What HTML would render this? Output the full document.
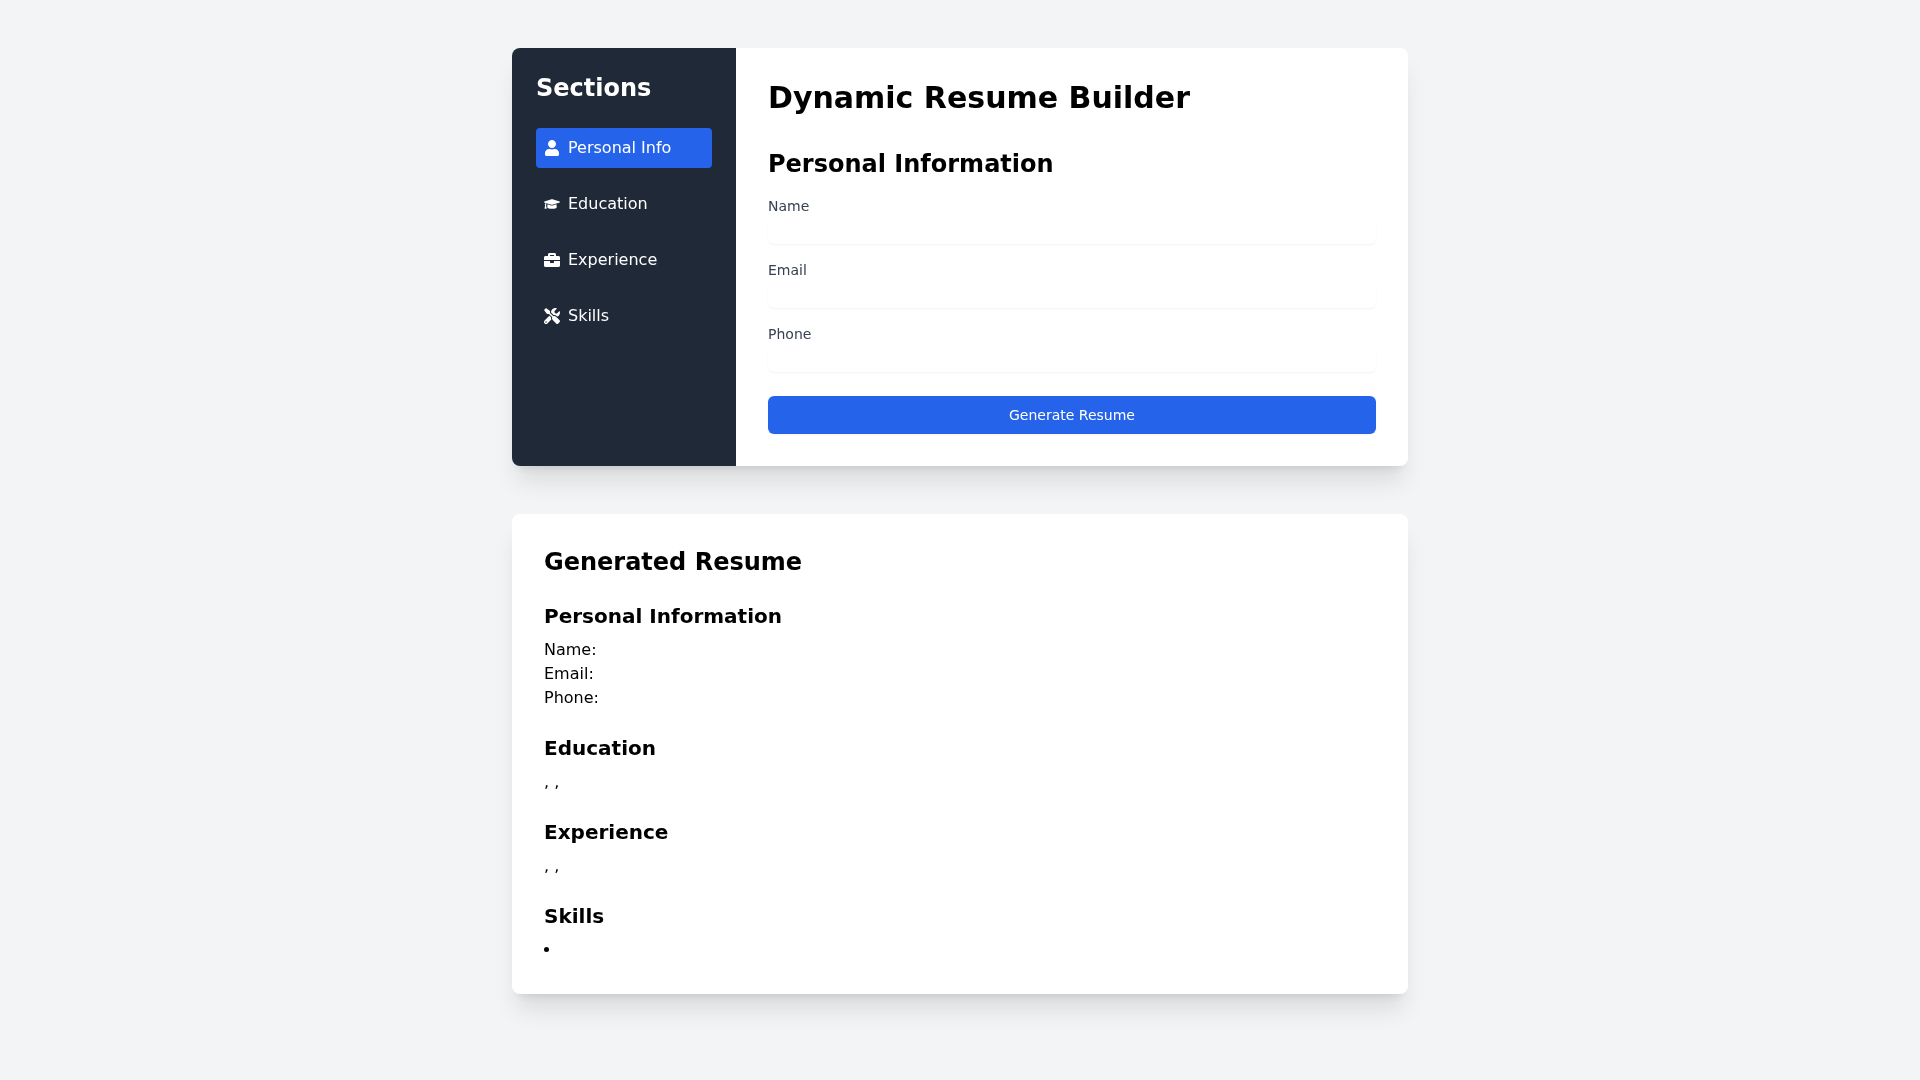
<!DOCTYPE html>
<html lang="en">
<head>
<meta charset="UTF-8">
<title>Dynamic Resume Builder</title>
<style>
*,*::before,*::after{box-sizing:border-box;border:0 solid #e5e7eb;}
html{line-height:1.5;-webkit-text-size-adjust:100%;}
html,body{margin:0;padding:0;}
body{width:1920px;height:1080px;overflow:hidden;background:#f3f4f6;color:#000;
  font-family:"DejaVu Sans","Liberation Sans",sans-serif;font-size:16px;line-height:24px;}
aside,nav,main,section,form{display:block;margin:0;padding:0;}
h1,h2,h3,p,ul,li{margin:0;padding:0;font-size:inherit;font-weight:inherit;}
button,input{font-family:inherit;font-size:100%;font-weight:inherit;line-height:inherit;color:inherit;margin:0;padding:0;background:transparent;-webkit-appearance:none;appearance:none;outline:none;cursor:pointer;}
.container{will-change:transform;width:896px;margin:0 auto;padding-top:48px;}
.card{background:#fff;border-radius:8px;
  box-shadow:0 20px 25px -5px rgba(0,0,0,.1),0 8px 10px -6px rgba(0,0,0,.1);}
.top{display:flex;overflow:hidden;}
.side{width:224px;background:#1f2937;color:#fff;padding:24px;}
.side h2{font-size:24px;line-height:32px;font-weight:700;margin-bottom:24px;}
.nav{display:block;width:100%;height:40px;padding:8px;border-radius:4px;margin-bottom:16px;
  font-size:16px;line-height:24px;color:#fff;text-align:left;white-space:nowrap;}
.nav.active{background:#2563eb;}
.nav svg{display:inline-block;width:16px;height:16px;vertical-align:-3px;margin-right:8px;fill:#fff;overflow:visible;}
.main{width:672px;padding:32px;}
.main h1{font-size:30px;line-height:36px;font-weight:700;margin-bottom:32px;}
.main h2{font-size:24px;line-height:32px;font-weight:700;margin-bottom:16px;}
.field{margin-bottom:16px;}
.field label{display:block;font-size:14px;line-height:20px;color:#374151;}
.field input{display:block;width:100%;height:24px;margin-top:4px;border-radius:6px;background:#fff;cursor:text;
  box-shadow:0 1px 2px 0 rgba(0,0,0,.05);}
.btn{display:flex;justify-content:center;width:100%;margin-top:24px;padding:8px 16px;border:1px solid transparent;
  border-radius:6px;background:#2563eb;color:#fff;font-size:14px;line-height:20px;
  box-shadow:0 1px 2px 0 rgba(0,0,0,.05);}
.out{margin-top:48px;padding:32px;}
.out h2{font-size:24px;line-height:32px;font-weight:700;margin-bottom:24px;}
.sec{margin-bottom:24px;}
.sec:last-child{margin-bottom:0;}
.sec h3{font-size:20px;line-height:28px;font-weight:700;margin-bottom:8px;}
.sec ul{list-style:disc inside;}
</style>
</head>
<body>
<div class="container">
  <div class="card top">
    <aside class="side">
      <h2>Sections</h2>
      <nav>
      <button type="button" class="nav active"><svg viewBox="0 0 448 512"><path d="M224 256c70.700 0 128-57.300 128-128S294.700 0 224 0 96 57.300 96 128s57.300 128 128 128zm89.600 32h-16.700c-22.200 10.200-46.900 16-72.900 16s-50.600-5.800-72.900-16h-16.700C60.200 288 0 348.200 0 422.400V464c0 26.500 21.500 48 48 48h352c26.500 0 48-21.500 48-48v-41.600c0-74.200-60.200-134.400-134.400-134.400z"/></svg>Personal Info</button>
      <button type="button" class="nav"><svg viewBox="0 0 640 512"><path d="M622.340 153.200L343.400 67.500c-15.200-4.670-31.600-4.670-46.790 0L17.660 153.200c-23.540 7.230-23.540 38.360 0 45.590l48.630 14.940c-10.670 13.190-17.230 29.280-17.880 46.900C38.780 266.150 32 276.110 32 288c0 10.780 5.680 19.850 13.860 25.650L20.330 428.530C18.110 438.520 25.710 448 35.940 448h56.110c10.240 0 17.840-9.480 15.620-19.470L82.140 313.650C90.320 307.850 96 298.780 96 288c0-11.570-6.470-21.250-15.660-26.870.76-15.020 8.440-28.300 20.690-36.720L296.600 284.500c9.060 2.780 26.440 6.250 46.790 0l278.950-85.700c23.550-7.240 23.550-38.360 0-45.600zM352.790 315.090c-28.530 8.760-52.840 3.920-65.590 0l-145.020-44.550L128 384c0 35.350 85.960 64 192 64s192-28.650 192-64l-14.180-113.470-145.030 44.560z"/></svg>Education</button>
      <button type="button" class="nav"><svg viewBox="0 0 512 512"><path d="M320 336c0 8.840-7.160 16-16 16h-96c-8.840 0-16-7.160-16-16v-48H0v144c0 25.600 22.400 48 48 48h416c25.600 0 48-22.400 48-48V288H320v48zm144-208h-80V80c0-25.600-22.400-48-48-48H176c-25.600 0-48 22.400-48 48v48H48c-25.600 0-48 22.400-48 48v80h512v-80c0-25.600-22.400-48-48-48zm-144 0H192V96h128v32z"/></svg>Experience</button>
      <button type="button" class="nav"><svg viewBox="0 0 512 512"><path d="M501.100 395.700L384 278.600c-23.100-23.100-57.600-27.600-85.400-13.900L192 158.100V96L64 0 0 64l96 128h62.100l106.600 106.600c-13.600 27.800-9.200 62.300 13.900 85.400l117.100 117.100c14.600 14.600 38.200 14.600 52.700 0l52.700-52.700c14.500-14.600 14.500-38.200 0-52.700zM331.700 225c28.300 0 54.900 11 74.900 31l19.400 19.400c15.800-6.900 30.800-16.500 43.800-29.500 37.100-37.100 49.700-89.300 37.900-136.700-2.200-9-13.500-12.100-20.100-5.500l-74.400 74.400-67.900-11.300L334 98.900l74.400-74.400c6.600-6.600 3.400-17.900-5.700-20.200-47.400-11.700-99.600.9-136.600 37.900-28.500 28.500-41.900 66.100-41.200 103.600l82.100 82.100c8.100-1.900 16.500-2.900 24.700-2.900zm-103.900 82l-56.700-56.700L18.700 402.800c-25 25-25 65.500 0 90.500s65.500 25 90.500 0l123.600-123.600c-7.600-19.900-9.900-41.600-5-62.700zM64 472c-13.200 0-24-10.800-24-24 0-13.300 10.700-24 24-24s24 10.700 24 24c0 13.200-10.700 24-24 24z"/></svg>Skills</button>
      </nav>
    </aside>
    <main class="main">
      <h1>Dynamic Resume Builder</h1>
      <form>
      <h2>Personal Information</h2>
      <div class="field"><label for="f-name">Name</label><input id="f-name" type="text"></div>
      <div class="field"><label for="f-email">Email</label><input id="f-email" type="email"></div>
      <div class="field" style="margin-bottom:0"><label for="f-phone">Phone</label><input id="f-phone" type="tel"></div>
      <button type="button" class="btn">Generate Resume</button>
      </form>
    </main>
  </div>
  <section class="card out">
    <h2>Generated Resume</h2>
    <div class="sec"><h3>Personal Information</h3><p>Name: </p><p>Email: </p><p>Phone: </p></div>
    <div class="sec"><h3>Education</h3><p>, , </p></div>
    <div class="sec"><h3>Experience</h3><p>, , </p></div>
    <div class="sec"><h3>Skills</h3><ul><li></li></ul></div>
  </section>
</div>
</body>
</html>
